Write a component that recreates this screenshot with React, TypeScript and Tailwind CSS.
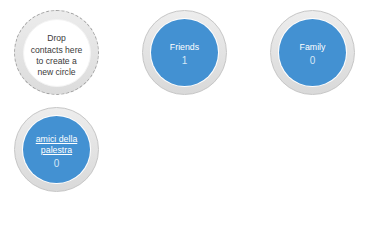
import React from "react";

interface Circle {
  name: string;
  count: number;
  link?: boolean;
}

const circles: Circle[] = [
  { name: "Friends", count: 1 },
  { name: "Family", count: 0 },
  { name: "amici della palestra", count: 0, link: true },
];

const DropCircle: React.FC = () => (
  <div className="w-[85px] h-[85px] rounded-full border border-dashed border-[#9f9f9f] bg-linear-to-b from-[#ececec] to-[#dcdcdc] flex items-center justify-center">
    <div className="w-[68px] h-[68px] rounded-full bg-white border border-[#f4f4f4] flex items-center justify-center text-center text-[8.6px] leading-[11.3px] text-[#3a3a3a] whitespace-nowrap pt-[7px]">
      <span>
        Drop
        <br />
        contacts here
        <br />
        to create a
        <br />
        new circle
      </span>
    </div>
  </div>
);

const CircleItem: React.FC<{ circle: Circle }> = ({ circle }) => (
  <div className="w-[85px] h-[85px] rounded-full border border-[#c6c6c6] bg-linear-to-b from-[#ededed] to-[#d9d9d9] flex items-center justify-center">
    <div className="w-[69px] h-[69px] rounded-full bg-white flex items-center justify-center">
      <div className="w-[67px] h-[67px] rounded-full bg-[#4391d2] flex flex-col items-center justify-center text-center text-white pt-[4px]">
        <span
          className={
            circle.link
              ? "text-[8.8px] leading-[11px] underline w-[50px]"
              : "text-[8.8px] leading-[11px]"
          }
        >
          {circle.name}
        </span>
        <span className="text-[10px] leading-[12px] mt-[2px] text-[#d6e7f6]">
          {circle.count}
        </span>
      </div>
    </div>
  </div>
);

export default function App() {
  return (
    <div
      className="w-[370px] h-[200px] bg-white pl-[14px] pt-[10px]"
      style={{ fontFamily: '"Liberation Sans", Arial, sans-serif' }}
    >
      <div className="flex flex-wrap w-[345px] gap-x-[43px] gap-y-[12px]">
        <DropCircle />
        {circles.map((c) => (
          <CircleItem key={c.name} circle={c} />
        ))}
      </div>
    </div>
  );
}
